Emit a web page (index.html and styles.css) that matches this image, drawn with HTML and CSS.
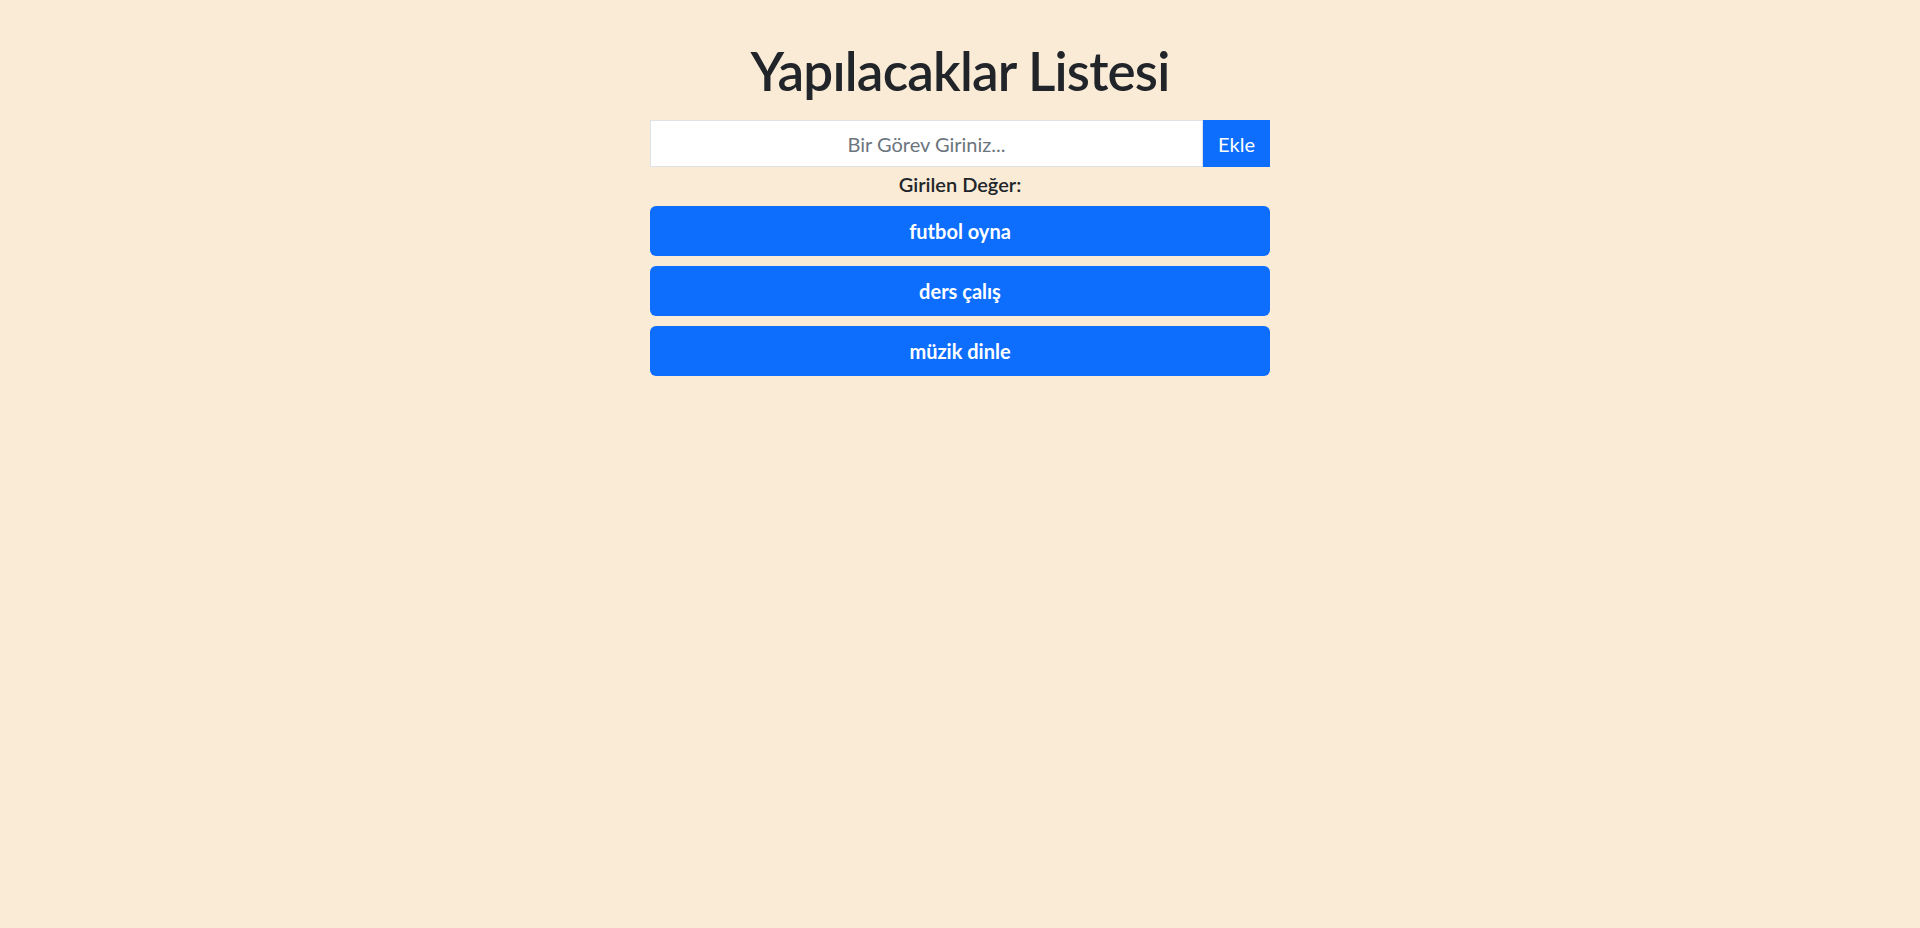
FILE: index.html
```html
<!DOCTYPE html>
<html lang="tr">
<head>
<meta charset="utf-8">
<title>Yapılacaklar Listesi</title>
<link rel="stylesheet" href="styles.css">
</head>
<body>
<div class="app">
  <h1 class="title">Yapılacaklar Listesi</h1>
  <div class="entry">
    <input class="entry-input" type="text" placeholder="Bir Görev Giriniz...">
    <button class="entry-btn" type="button">Ekle</button>
  </div>
  <div class="value-label">Girilen Değer:</div>
  <ul class="todo-list">
    <li class="todo-item">futbol oyna</li>
    <li class="todo-item">ders çalış</li>
    <li class="todo-item">müzik dinle</li>
  </ul>
</div>
</body>
</html>
```
FILE: styles.css
```css
html, body {
  margin: 0;
  padding: 0;
}
body {
  background: #faebd7;
  font-family: Lato, "Open Sans", sans-serif;
  color: #212529;
  min-height: 928px;
}
.app {
  width: 620px;
  margin: 0 auto;
  padding-top: 37px;
  display: flex;
  flex-direction: column;
}
.title {
  margin: 0 0 16px;
  text-align: center;
  font-size: 53px;
  line-height: 67px;
  font-weight: 600;
  letter-spacing: -0.8px;
  color: #212529;
}
.entry {
  display: flex;
  height: 47px;
}
.entry-input {
  flex: 1;
  min-width: 0;
  box-sizing: border-box;
  height: 47px;
  margin: 0;
  padding: 0 16px;
  border: 1px solid #dee2e6;
  border-radius: 0;
  background: #fff;
  font-family: inherit;
  font-size: 20px;
  text-align: center;
  color: #212529;
  outline: none;
}
.entry-input::placeholder {
  color: #6c757d;
  opacity: 1;
}
.entry-btn {
  width: 67px;
  height: 47px;
  margin: 0;
  padding: 0;
  border: none;
  border-radius: 0;
  background: #0d6efd;
  color: #fff;
  font-family: inherit;
  font-size: 20px;
}
.value-label {
  margin-top: 5px;
  text-align: center;
  font-size: 20px;
  line-height: 24px;
  font-weight: 600;
}
.todo-list {
  list-style: none;
  margin: 10px 0 0;
  padding: 0;
  display: flex;
  flex-direction: column;
  gap: 10px;
}
.todo-item {
  height: 50px;
  display: flex;
  align-items: center;
  justify-content: center;
  background: #0d6efd;
  color: #fff;
  border-radius: 6px;
  font-size: 20px;
  font-weight: 700;
}
```
